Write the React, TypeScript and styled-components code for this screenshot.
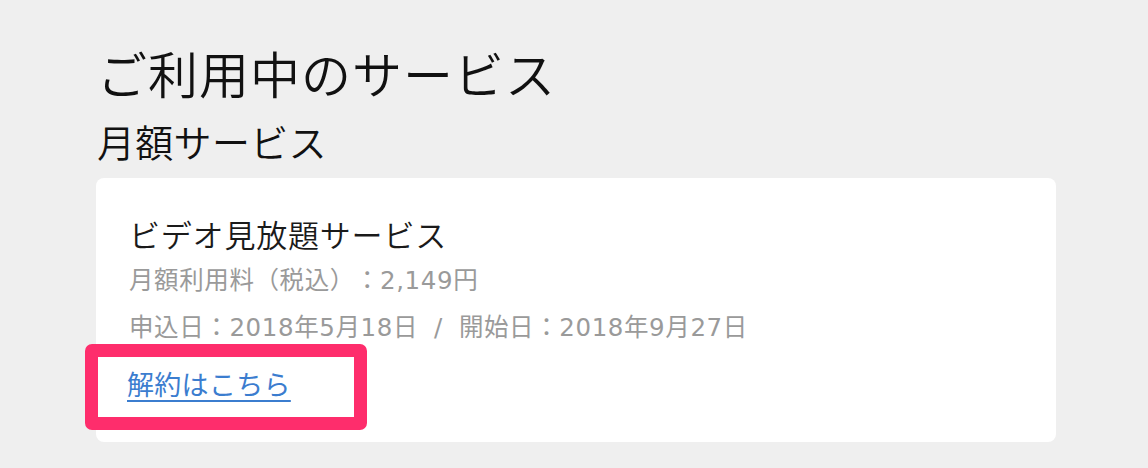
import React from 'react';
import styled, { createGlobalStyle } from 'styled-components';

const GlobalStyle = createGlobalStyle`
  html, body {
    margin: 0;
    padding: 0;
    background: #efefef;
  }
  body {
    font-family: "Noto Sans CJK JP", "Noto Sans", sans-serif;
    color: #111;
    text-spacing-trim: space-all;
  }
`;

function App(): React.ReactElement {
  return (
    <Page>
      <GlobalStyle />
      <PageTitle>ご利用中のサービス</PageTitle>
      <SectionTitle>月額サービス</SectionTitle>
      <Card>
        <ServiceName>ビデオ見放題サービス</ServiceName>
        <Meta>月額利用料（税込）：2,149円</Meta>
        <Meta>
          申込日：2018年5月18日<Separator>/</Separator>開始日：2018年9月27日
        </Meta>
        <LinkRow>
          <CancelLink href="#">解約はこちら</CancelLink>
          <Highlight />
        </LinkRow>
      </Card>
    </Page>
  );
}

export default App;

const Page = styled.div`
  width: 1148px;
  height: 468px;
  box-sizing: border-box;
  padding: 38px 0 0 96px;
  overflow: hidden;
`;

const PageTitle = styled.h1`
  margin: 0 0 0 1px;
  font-size: 50px;
  font-weight: 350;
  line-height: 68px;
  letter-spacing: 1px;
`;

const SectionTitle = styled.h2`
  margin: 10px 0 0 1px;
  font-size: 38px;
  font-weight: 350;
  line-height: 50px;
  letter-spacing: 0.3px;
`;

const Card = styled.div`
  position: relative;
  width: 960px;
  height: 264px;
  margin-top: 12px;
  box-sizing: border-box;
  padding: 34px 0 0 33px;
  background: #fff;
  border-radius: 8px;
`;

const ServiceName = styled.div`
  font-size: 31px;
  font-weight: 350;
  line-height: 44px;
  color: #1a1a1a;
  letter-spacing: 0.8px;
`;

const Meta = styled.div`
  margin-top: 3px;
  font-family: "DejaVu Sans", "Noto Sans CJK JP", sans-serif;
  font-size: 24.5px;
  font-weight: 400;
  line-height: 44px;
  letter-spacing: 0.6px;
  color: #9a9a9a;
  text-spacing-trim: space-all;
`;

const Separator = styled.span`
  margin: 0 16px;
`;

const LinkRow = styled.div`
  position: relative;
  margin-top: 14px;
`;

const CancelLink = styled.a`
  margin-left: -2px;
  font-size: 27px;
  line-height: 40px;
  color: #3b7dcf;
  letter-spacing: 0.3px;
  text-decoration: underline;
  text-decoration-thickness: 2px;
  text-underline-offset: 5px;
`;

const Highlight = styled.div`
  position: absolute;
  left: -44px;
  top: -20px;
  width: 282px;
  height: 86px;
  box-sizing: border-box;
  border: 13px solid #fe2d6c;
  border-radius: 7px;
  pointer-events: none;
`;
